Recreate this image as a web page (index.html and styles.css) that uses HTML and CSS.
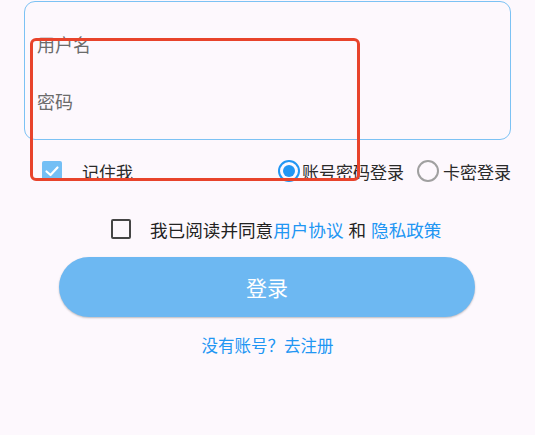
FILE: index.html
```html
<!DOCTYPE html>
<html lang="zh-CN">
<head>
<meta charset="utf-8">
<link rel="stylesheet" href="styles.css">
</head>
<body>
<div class="page">
  <div class="form-box">
    <div class="field">用户名</div>
    <div class="field">密码</div>
  </div>
  <div class="options">
    <div class="remember">
      <span class="check on">
        <svg viewBox="0 0 20 20" width="20" height="20"><path d="M4.5 10.5 L8.5 14 L15.5 6.5" fill="none" stroke="#fff" stroke-width="2.2" stroke-linecap="round" stroke-linejoin="round"/></svg>
      </span>
      <span class="remember-text">记住我</span>
    </div>
    <div class="modes">
      <span class="radio on"><span class="dot"></span></span>
      <span class="mode-text">账号密码登录</span>
      <span class="radio off"></span>
      <span class="mode-text last">卡密登录</span>
    </div>
  </div>
  <div class="agree">
    <span class="check empty"></span>
    <span class="agree-text">我已阅读并同意<a class="link">用户协议</a> 和 <a class="link">隐私政策</a></span>
  </div>
  <div class="btn-row">
    <button class="login-btn">登录</button>
  </div>
  <div class="register"><a class="link">没有账号？去注册</a></div>
  <div class="annot"></div>
</div>
</body>
</html>
```
FILE: styles.css
```css
* { box-sizing: border-box; }
html, body {
  margin: 0;
  padding: 0;
  background: #fdf8fd;
  font-family: "Noto Sans CJK SC", "Noto Sans", sans-serif;
}
.page {
  position: relative;
  width: 535px;
  height: 435px;
  padding-top: 1px;
}
.form-box {
  margin-left: 24px;
  width: 487px;
  height: 139px;
  border: 1px solid #7cc2f4;
  border-radius: 11px;
  padding: 14px 0 0 12px;
}
.field {
  height: 57px;
  line-height: 57px;
  font-size: 18px;
  color: #6b6b6b;
}
.options {
  display: flex;
  align-items: center;
  justify-content: space-between;
  margin: 20px 24px 0 42px;
  height: 22px;
}
.remember { display: flex; align-items: center; }
.check {
  width: 20px;
  height: 20px;
  border-radius: 2px;
  display: inline-flex;
  align-items: center;
  justify-content: center;
}
.check.on { background: #74bff5; }
.check.empty { border: 2px solid #454545; }
.remember-text {
  margin-left: 20px;
  font-size: 17px;
  color: #2a2a2a;
}
.modes { display: flex; align-items: center; }
.radio {
  width: 22px;
  height: 22px;
  border-radius: 50%;
  display: inline-flex;
  align-items: center;
  justify-content: center;
}
.radio.on { border: 2px solid #2196f3; }
.radio.on .dot { width: 12px; height: 12px; border-radius: 50%; background: #2196f3; }
.radio.off { border: 2px solid #a0a0a0; margin-left: 13px; }
.mode-text {
  font-size: 17px;
  color: #2a2a2a;
  margin-left: 2px;
}
.mode-text.last { margin-left: 4px; }
.agree {
  display: flex;
  align-items: center;
  margin: 36px 0 0 111px;
  height: 22px;
}
.agree-text {
  margin-left: 19px;
  font-size: 17.6px;
  color: #222;
  word-spacing: 1px;
}
.link { color: #2196f3; text-decoration: none; }
.btn-row { margin: 17px 0 0 59px; }
.login-btn {
  width: 416px;
  height: 60px;
  border: none;
  border-radius: 30px;
  background: #6db8f2;
  color: #fff;
  font-family: "Noto Sans CJK SC", sans-serif;
  font-size: 21px;
  box-shadow: 0 1px 2px rgba(0,0,0,0.25);
  padding: 0;
}
.register {
  text-align: center;
  margin-top: 16px;
  font-size: 16.5px;
  line-height: 24px;
}
.annot {
  position: absolute;
  left: 30px;
  top: 38px;
  width: 330px;
  height: 143px;
  border: 3px solid #e8432b;
  border-radius: 6px;
}
```
